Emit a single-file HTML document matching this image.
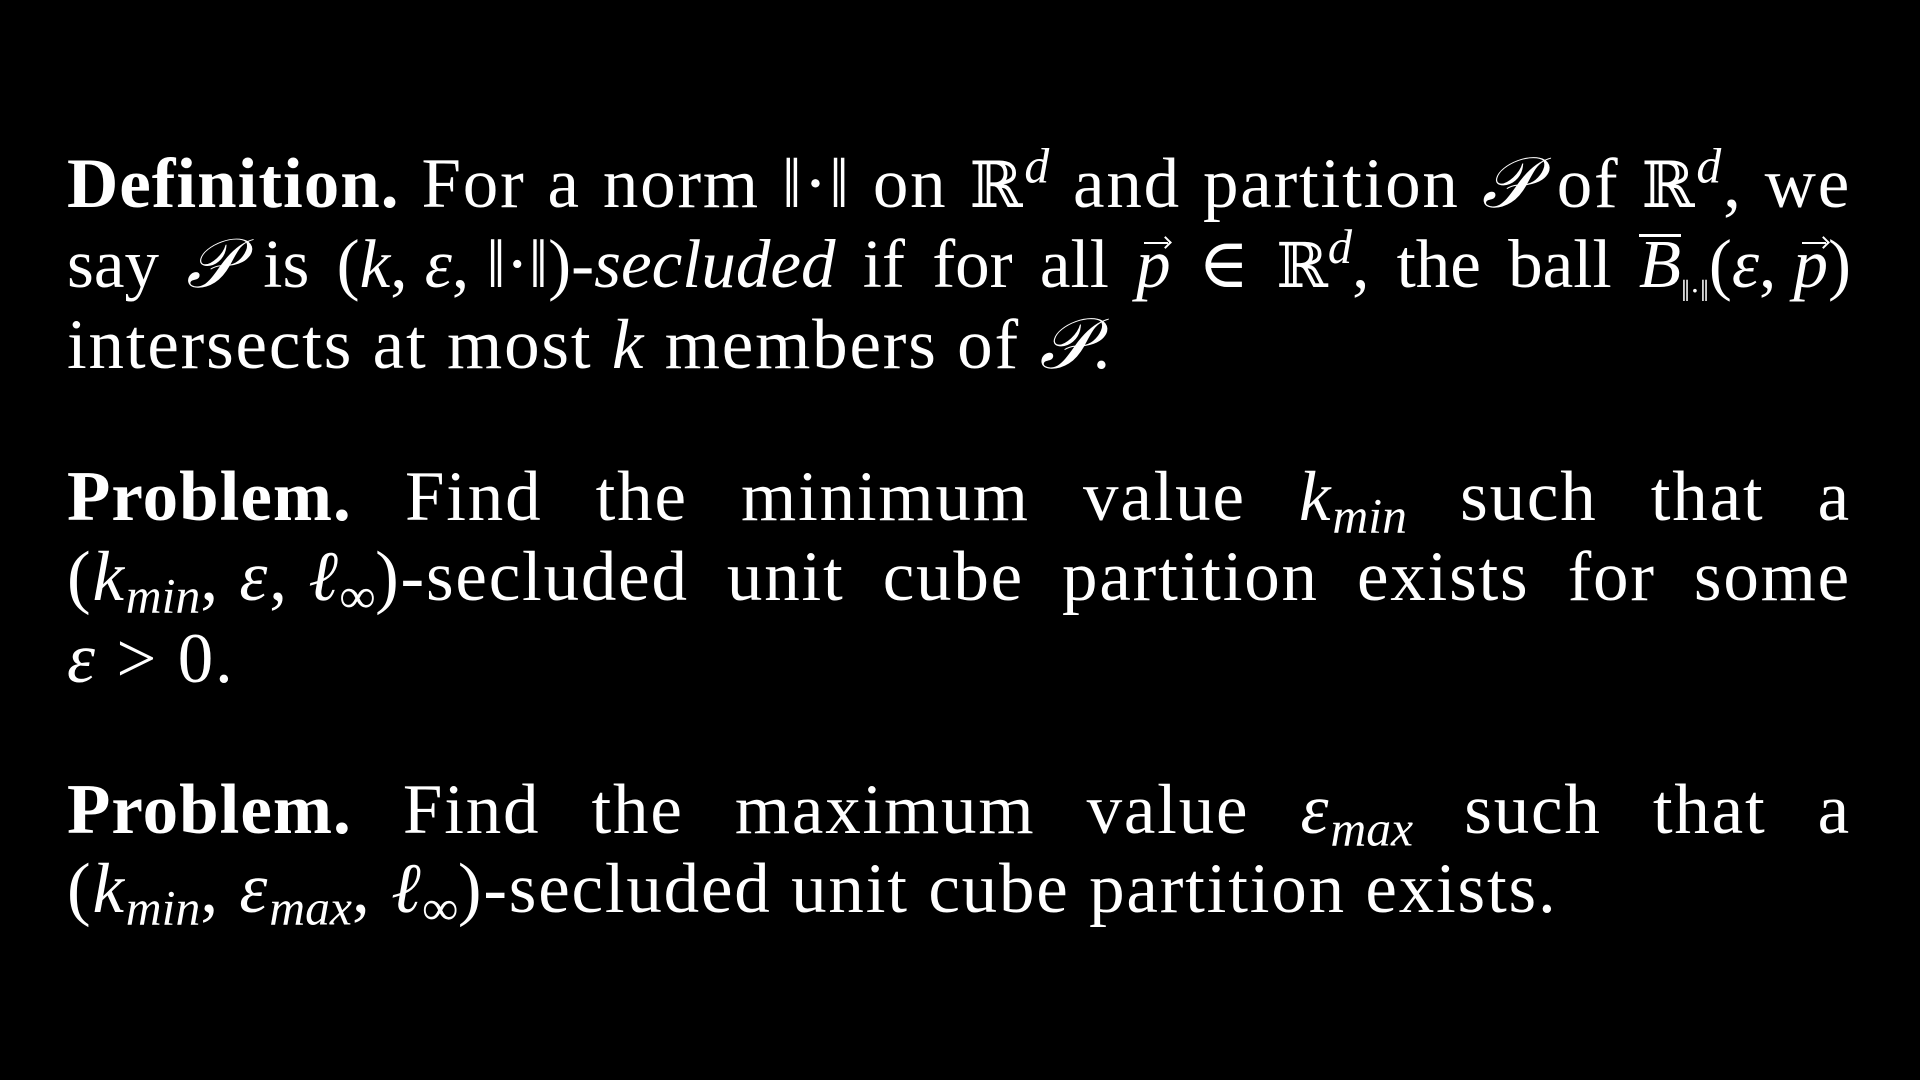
<!DOCTYPE html>
<html><head><meta charset="utf-8"><style>
html,body{margin:0;padding:0;background:#000;width:1920px;height:1080px;overflow:hidden}
body{font-family:"Liberation Serif","DejaVu Serif",serif;color:#fff;font-size:71px;position:relative;letter-spacing:1.8px}
.l{position:absolute;left:67px;width:1784px;line-height:69px;height:69px;white-space:nowrap}
.j{text-align:justify;text-align-last:justify;white-space:normal}
i{font-style:italic}
b{font-weight:bold;letter-spacing:1px}
sub{font-size:0.7em;vertical-align:-0.25em;line-height:0;font-style:italic;letter-spacing:0}
.sub2{font-size:0.45em;vertical-align:-0.45em;line-height:0}
.ob{display:inline-block;border-top:3px solid #fff;line-height:0.8em}
.bb{font-family:"DejaVu Serif",serif;font-size:0.9em}
.m{display:inline-block;white-space:nowrap}
.vec{display:inline-block;position:relative;font-style:italic}
.vec:after{content:"";position:absolute;left:8px;top:12px;width:24px;height:2px;background:#fff}
.vec:before{content:"";position:absolute;left:25px;top:8px;width:7px;height:7px;border-top:2px solid #fff;border-right:2px solid #fff;transform:rotate(45deg)}
sup{font-size:.7em;line-height:0}
</style></head><body>
<div class="l j" style="top:150px"><b>Definition.</b> For a norm <span class="m">‖·‖</span> on <span class="m"><span class="bb">ℝ</span><sup><i>d</i></sup></span> and partition <i>𝒫</i> of <span class="m"><span class="bb">ℝ</span><sup><i>d</i></sup>,</span> we</div>
<div class="l j" style="top:230px;letter-spacing:0;font-size:69px">say <i>𝒫</i> is <span class="m">(<i>k</i>, <i>ε</i>, ‖·‖)-<i>secluded</i></span> if for all <span class="vec">p</span> ∈ <span class="m"><span class="bb">ℝ</span><sup><i>d</i></sup>,</span> the ball <span class="m"><i class="ob">B</i><span class="sub2">‖·‖</span>(<i>ε</i>, <span class="vec">p</span>)</span></div>
<div class="l" style="top:311px">intersects at most <i>k</i> members of <i>𝒫</i>.</div>
<div class="l j" style="top:463px"><b>Problem.</b> Find the minimum value <span class="m"><i>k</i><sub>min</sub></span> such that a</div>
<div class="l j" style="top:543px"><span class="m">(<i>k</i><sub>min</sub>, <i>ε</i>, <i>ℓ</i><sub>∞</sub>)-secluded</span> unit cube partition exists for some</div>
<div class="l" style="top:625px"><i>ε</i> &gt; 0.</div>
<div class="l j" style="top:776px"><b>Problem.</b> Find the maximum value <span class="m"><i>ε</i><sub>max</sub></span> such that a</div>
<div class="l" style="top:855px">(<i>k</i><sub>min</sub>, <i>ε</i><sub>max</sub>, <i>ℓ</i><sub>∞</sub>)-secluded unit cube partition exists.</div>
</body></html>
